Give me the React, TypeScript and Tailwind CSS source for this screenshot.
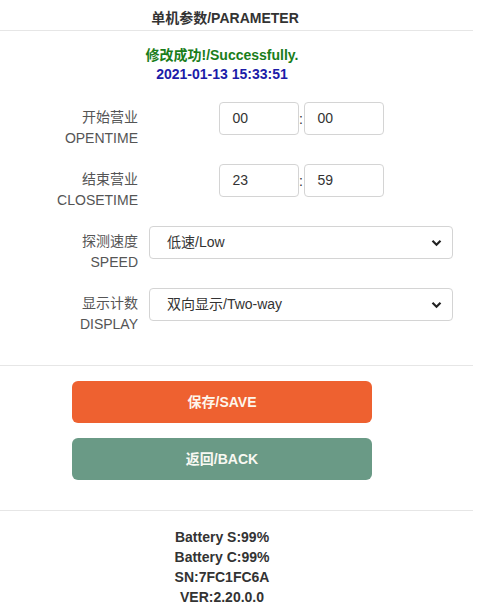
const font = "font-['Liberation_Sans','Noto_Sans_CJK_SC',sans-serif]";

function Label({ cn, en }: { cn: string; en: string }) {
  return (
    <div className="w-[138px] shrink-0 pt-[5px] text-right text-[14px] leading-[21px] text-[#555]">
      <div>{cn}</div>
      <div>{en}</div>
    </div>
  );
}

function TimeRow({ cn, en, h, m }: { cn: string; en: string; h: string; m: string }) {
  return (
    <div className="flex h-[62px] items-start">
      <Label cn={cn} en={en} />
      <div className="ml-[11px] flex w-[304px] items-center justify-center">
        <div className="flex h-[33px] w-[80px] items-center rounded-[4px] border border-[#d4d4d4] pl-[13px] text-[14px] text-[#333]">
          {h}
        </div>
        <span className="w-[5px] text-center text-[14px] leading-none text-[#333]">:</span>
        <div className="flex h-[33px] w-[80px] items-center rounded-[4px] border border-[#d4d4d4] pl-[13px] text-[14px] text-[#333]">
          {m}
        </div>
      </div>
    </div>
  );
}

function SelectRow({ cn, en, value }: { cn: string; en: string; value: string }) {
  return (
    <div className="flex h-[62px] items-start">
      <Label cn={cn} en={en} />
      <div className="ml-[11px] flex h-[33px] w-[304px] items-center justify-between rounded-[4px] border border-[#d4d4d4] pl-[17px] pr-[10px] text-[14px] text-[#333]">
        <span>{value}</span>
        <svg width="11" height="8" viewBox="0 0 11 8">
          <path d="M1.5 1.8 L5.5 5.8 L9.5 1.8" fill="none" stroke="#222" strokeWidth="2.2" />
        </svg>
      </div>
    </div>
  );
}

export default function App() {
  return (
    <div className={`${font} h-[610px] w-[488px] bg-white`}>
      <div className="w-[473px]">
        <div className="h-[31px] border-b border-[#e6e6e6]">
          <div className="w-[450px] pt-[8px] text-center text-[14px] font-bold leading-[20px] text-[#333]">
            单机参数/PARAMETER
          </div>
        </div>

        <div className="w-[444px] pt-[15px] text-center text-[14px] font-bold leading-[19px]">
          <div className="text-[#1a7d1a]">修改成功!/Successfully.</div>
          <div className="text-[#1c1ca8]">2021-01-13 15:33:51</div>
        </div>

        <div className="mt-[18px]">
          <TimeRow cn="开始营业" en="OPENTIME" h="00" m="00" />
          <TimeRow cn="结束营业" en="CLOSETIME" h="23" m="59" />
          <SelectRow cn="探测速度" en="SPEED" value="低速/Low" />
          <SelectRow cn="显示计数" en="DISPLAY" value="双向显示/Two-way" />
        </div>

        <div className="mt-[15px] border-b border-[#e6e6e6]" />

        <div className="flex w-[444px] flex-col items-center gap-[15px] pt-[15px] pb-[30px]">
          <button className="h-[42px] w-[300px] rounded-[6px] bg-[#ee6130] text-[14px] font-bold text-[#fdf6ec]">
            保存/SAVE
          </button>
          <button className="h-[42px] w-[300px] rounded-[6px] bg-[#6a9a86] text-[14px] font-bold text-[#f8f8f2]">
            返回/BACK
          </button>
        </div>

        <div className="border-b border-[#e6e6e6]" />

        <div className="w-[444px] pt-[16px] text-center text-[14px] font-bold leading-[20px] text-[#333]">
          <div>Battery S:99%</div>
          <div>Battery C:99%</div>
          <div>SN:7FC1FC6A</div>
          <div>VER:2.20.0.0</div>
        </div>
      </div>
    </div>
  );
}
